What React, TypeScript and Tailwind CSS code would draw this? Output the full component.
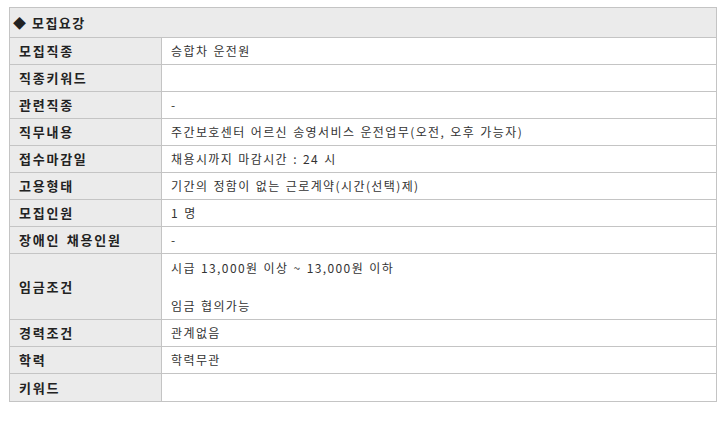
import React from "react";

const rows: { label: string; value: React.ReactNode; tall?: boolean }[] = [
  { label: "모집직종", value: "승합차 운전원" },
  { label: "직종키워드", value: "" },
  { label: "관련직종", value: "-" },
  { label: "직무내용", value: "주간보호센터 어르신 송영서비스 운전업무(오전, 오후 가능자)" },
  { label: "접수마감일", value: "채용시까지 마감시간 : 24 시" },
  { label: "고용형태", value: "기간의 정함이 없는 근로계약(시간(선택)제)" },
  { label: "모집인원", value: "1 명" },
  { label: "장애인 채용인원", value: "-" },
  {
    label: "임금조건",
    value: (
      <>
        <div>시급 13,000원 이상 ~ 13,000원 이하</div>
        <div>&nbsp;</div>
        <div>임금 협의가능</div>
      </>
    ),
    tall: true,
  },
  { label: "경력조건", value: "관계없음" },
  { label: "학력", value: "학력무관" },
  { label: "키워드", value: "" },
];

export default function App() {
  return (
    <div
      className="w-[728px] h-[421px] bg-white pt-[7px] pl-[9px]"
      style={{ fontFamily: '"Noto Sans CJK KR", "Noto Sans", sans-serif' }}
    >
      <div className="w-[708px] border border-[#c4c4c4] text-[#333]">
        <div className="h-[30px] bg-[#ebebeb] border-b border-[#c4c4c4] flex items-center pl-[3px] text-[13px] font-bold text-[#222] tracking-[1.5px]">
          ◆ 모집요강
        </div>
        {rows.map((r, i) => (
          <div
            key={i}
            className={`flex ${i < rows.length - 1 ? "border-b border-[#c4c4c4]" : ""} ${
              r.tall ? "h-[66px]" : "h-[27px]"
            }`}
          >
            <div className="w-[152px] shrink-0 bg-[#ebebeb] border-r border-[#c4c4c4] flex items-center pl-[9px] text-[13px] font-bold text-[#222] tracking-[1.75px] [word-spacing:2px]">
              {r.label}
            </div>
            <div
              className={`flex-1 pl-[9px] text-[12px] tracking-[1.4px] [word-spacing:1px] ${
                r.tall ? "py-[4px] leading-[19px]" : "flex items-center"
              }`}
            >
              {r.value}
            </div>
          </div>
        ))}
      </div>
    </div>
  );
}
